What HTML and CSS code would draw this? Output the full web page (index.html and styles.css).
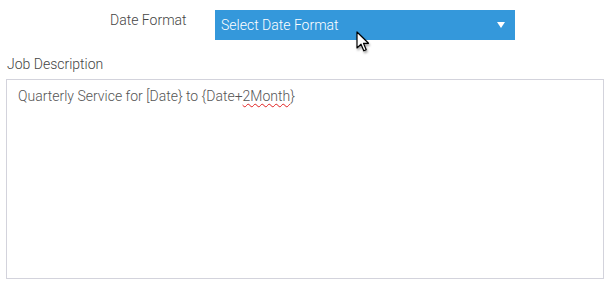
FILE: index.html
```html
<!DOCTYPE html>
<html>
<head>
<meta charset="utf-8">
<link rel="stylesheet" href="styles.css">
</head>
<body>
<div class="page">
  <div class="row">
    <label class="row-label">Date Format</label>
    <div class="select">
      <span class="select-text">Select Date Format</span>
      <span class="caret"></span>
    </div>
  </div>
  <div class="field">
    <label class="field-label">Job Description</label>
    <div class="textarea">Quarterly Service for [Date} to {Date+<span class="misspelled">2Month</span>}</div>
  </div>
  <svg class="cursor" width="14" height="22" viewBox="0 0 14 22">
    <path d="M1 1 L1 17 L5 13.2 L7.8 19.8 L10.2 18.8 L7.5 12.3 L12.5 12.3 Z" fill="#fff" stroke="#000" stroke-width="1.2" stroke-linejoin="round"/>
  </svg>
</div>
</body>
</html>
```
FILE: styles.css
```css
html, body {
  margin: 0;
  padding: 0;
  background: #fff;
}
.page {
  position: relative;
  width: 611px;
  height: 289px;
  font-family: Roboto, "Liberation Sans", sans-serif;
}
.row {
  display: flex;
  align-items: flex-start;
  padding-top: 10px;
}
.row-label {
  width: 105px;
  padding-left: 110px;
  font-size: 14px;
  font-weight: 300;
  color: #444;
  line-height: 20px;
  padding-top: 0;
  box-sizing: content-box;
}
.select {
  width: 300px;
  height: 30px;
  background: #3498db;
  display: flex;
  align-items: center;
  justify-content: space-between;
  padding: 0 10px 0 6px;
  box-sizing: border-box;
}
.select-text {
  color: #fff;
  font-size: 14px;
  font-weight: 300;
}
.caret {
  width: 0;
  height: 0;
  border-left: 4px solid transparent;
  border-right: 4px solid transparent;
  border-top: 6px solid #fff;
}
.field {
  padding: 16px 7px 0 6px;
}
.field-label {
  display: block;
  font-size: 14px;
  font-weight: 300;
  color: #444;
  padding-left: 1px;
  line-height: 16px;
  margin-bottom: 7px;
}
.textarea {
  height: 200px;
  width: 598px;
  box-sizing: border-box;
  border: 1px solid #d3d3dc;
  padding: 7px 11px;
  font-size: 14px;
  font-weight: 300;
  color: #555;
  line-height: 18px;
}
.misspelled {
  text-decoration: underline wavy #e02020;
  text-decoration-thickness: 1px;
  text-underline-offset: 2px;
}
.cursor {
  position: absolute;
  left: 356px;
  top: 31px;
  filter: drop-shadow(1px 2px 1px rgba(0,0,0,0.35));
}
```
